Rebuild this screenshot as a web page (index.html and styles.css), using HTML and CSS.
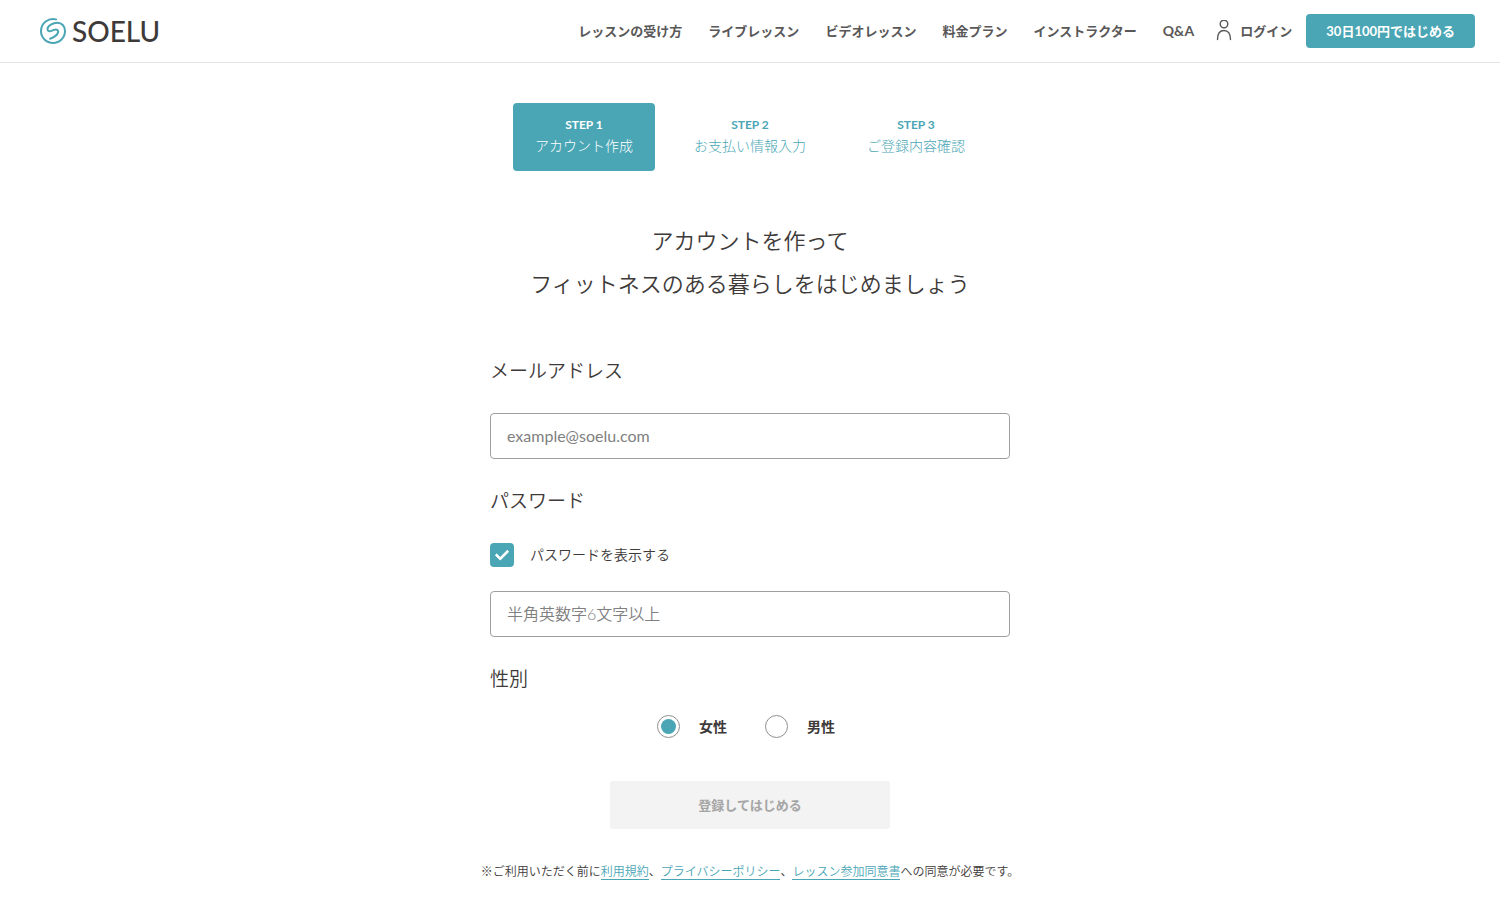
FILE: index.html
```
<!DOCTYPE html>
<html lang="ja">
  <head>
    <meta charset="utf-8" />
    <title>アカウント作成 | SOELU</title>
    <meta name="viewport" content="width=device-width,initial-scale=1" />
    <link rel="stylesheet" href="styles.css">
  </head>
  <body>
    <header class="header">
      <a href="#" class="logo" aria-label="SOELU">
        <svg class="logo-mark" width="28" height="28" viewBox="0 0 28 28" fill="none" stroke="#4aa6b5" stroke-width="2" stroke-linecap="round" stroke-linejoin="round">
          <path d="M17 2.400C9.500.4 2 6.200 2 14c0 6.800 5.400 12 12 12s12-5.200 12-12c0-5-3.300-8.200-7.500-8.200C14 5.800 8.500 8.500 8.500 12c0 2.500 2.200 2.600 4 1.900l2.500-1c2.600-1 4.600.2 4.100 2.400-.6 2.600-4 5-8 6.400"/>
        </svg>
        <span class="logo-text">SOELU</span>
      </a>
      <nav class="nav">
        <a href="#">レッスンの受け方</a>
        <a href="#">ライブレッスン</a>
        <a href="#">ビデオレッスン</a>
        <a href="#">料金プラン</a>
        <a href="#">インストラクター</a>
        <a href="#" class="latin">Q&amp;A</a>
        <a href="#" class="login">
          <svg width="16" height="22" viewBox="0 0 16 22" fill="none" stroke="#595757" stroke-width="1.400" stroke-linecap="round">
            <circle cx="8" cy="4" r="3.800"/>
            <path d="M1.500 19.500c0-6 2.500-9 6.500-9s6.500 3 6.500 9"/>
          </svg>
          ログイン
        </a>
        <a href="#" class="start">30日100円ではじめる</a>
      </nav>
    </header>

    <main class="main">
      <ol class="steps">
        <li class="step active"><b>STEP 1</b>アカウント作成</li>
        <li class="step"><b>STEP 2</b>お支払い情報入力</li>
        <li class="step"><b>STEP 3</b>ご登録内容確認</li>
      </ol>

      <h1 class="title">アカウントを作って<br />フィットネスのある暮らしをはじめましょう</h1>

      <form class="form">
        <label class="label" for="email">メールアドレス</label>
        <input class="text" type="email" id="email" placeholder="example@soelu.com" />

        <label class="label" for="password">パスワード</label>
        <label class="show-password">
          <input type="checkbox" checked />
          パスワードを表示する
        </label>
        <input class="text" type="text" id="password" placeholder="半角英数字6文字以上" />

        <fieldset class="gender">
          <legend class="label">性別</legend>
          <div class="radios">
            <label><input type="radio" name="gender" value="female" checked />女性</label>
            <label><input type="radio" name="gender" value="male" />男性</label>
          </div>
        </fieldset>

        <button class="submit" type="submit" disabled>登録してはじめる</button>
      </form>

      <p class="terms">※ご利用いただく前に<a href="#">利用規約</a>、<a href="#">プライバシーポリシー</a>、<a href="#">レッスン参加同意書</a>への同意が必要です。</p>
    </main>
  </body>
</html>
```

FILE: styles.css
```
* {
  box-sizing: border-box;
}

body {
  margin: 0;
  background-color: #fff;
  color: #3e3a39;
  font-family: Lato, "Noto Sans CJK JP", sans-serif;
  font-size: 14px;
  font-weight: 350;
  line-height: 22px;
}

a {
  color: #4aa6b5;
  text-decoration: none;
}

.header {
  display: flex;
  justify-content: space-between;
  align-items: center;
  padding: 14px 25px 14px 39px;
  border-bottom: 1px solid #e2e2e2;
}

.logo {
  display: flex;
  align-items: center;
  gap: 5px;
  color: #3e3a39;
}

.logo-text {
  font-size: 28px;
  font-weight: 500;
  line-height: 34px;
}

.nav {
  display: flex;
  align-items: center;
  gap: 26px;
}

.nav a {
  color: #595757;
  font-size: 13px;
  font-weight: 700;
  white-space: nowrap;
}

.nav .latin {
  font-size: 14px;
}

.nav .login {
  display: flex;
  align-items: center;
  gap: 8px;
  margin-left: -4px;
}

.nav .start {
  margin-left: -12px;
  padding: 6px 20px;
  border-radius: 4px;
  background-color: #4aa6b5;
  color: #fff;
}

.main {
  padding: 40px 20px 18px;
}

.steps {
  display: flex;
  justify-content: center;
  gap: 24px;
  margin: 0;
  padding: 0;
  list-style: none;
}

.step {
  width: 142px;
  padding: 12px 0 14px;
  border-radius: 4px;
  color: #4aa6b5;
  font-weight: 300;
  text-align: center;
}

.step b {
  display: block;
  font-size: 12px;
  font-weight: 700;
  line-height: 20px;
}

.step.active {
  background-color: #4aa6b5;
  color: #fff;
}

.title {
  margin: 48px 0;
  font-size: 22px;
  font-weight: 350;
  line-height: 43px;
  text-align: center;
}

.form {
  max-width: 520px;
  margin: 0 auto;
}

.label {
  display: block;
  padding: 0;
  font-size: 19px;
  line-height: 36px;
}

.text {
  display: block;
  width: 100%;
  height: 46px;
  margin: 24px 0;
  padding: 0 16px 2px;
  border: 1px solid #9f9f9f;
  border-radius: 4px;
  color: #3e3a39;
  font: inherit;
  font-size: 16px;
}

.text::placeholder {
  color: #808080;
}

#email::placeholder {
  font-weight: 400;
}

.show-password {
  display: flex;
  align-items: center;
  gap: 16px;
  margin-top: 24px;
}

input[type="checkbox"],
input[type="radio"] {
  appearance: none;
  width: 24px;
  height: 24px;
  margin: 0;
}

input[type="checkbox"] {
  display: flex;
  justify-content: center;
  align-items: center;
  padding-bottom: 4px;
  border-radius: 4px;
}

input[type="checkbox"]:checked {
  background-color: #4aa6b5;
}

/* check mark */
input[type="checkbox"]:checked::before {
  content: "";
  box-sizing: border-box;
  width: 8px;
  height: 13px;
  border: solid #fff;
  border-width: 0 3px 3px 0;
  border-radius: 1px;
  transform: rotate(45deg);
}

input[type="radio"] {
  width: 23px;
  height: 23px;
  border: 1px solid #8f8f8f;
  border-radius: 50%;
}

input[type="radio"]:checked {
  padding: 3px;
  background: #4aa6b5 content-box;
}

.gender {
  margin: 0;
  padding: 0;
  border: 0;
}

.radios {
  display: flex;
  justify-content: center;
  gap: 30px;
  margin-top: 18px;
}

.radios label {
  display: flex;
  align-items: center;
  gap: 19px;
  padding-right: 8px;
  font-weight: 700;
}

.submit {
  display: block;
  width: 280px;
  height: 48px;
  margin: 43px auto 32px;
  border: 0;
  border-radius: 3px;
  background-color: #f3f3f3;
  color: #a5a5a5;
  font: inherit;
  font-size: 13px;
  font-weight: 700;
}

.terms {
  margin: 0;
  font-size: 12px;
  text-align: center;
}

.terms a {
  border-bottom: 1px solid #4aa6b5;
}
```
